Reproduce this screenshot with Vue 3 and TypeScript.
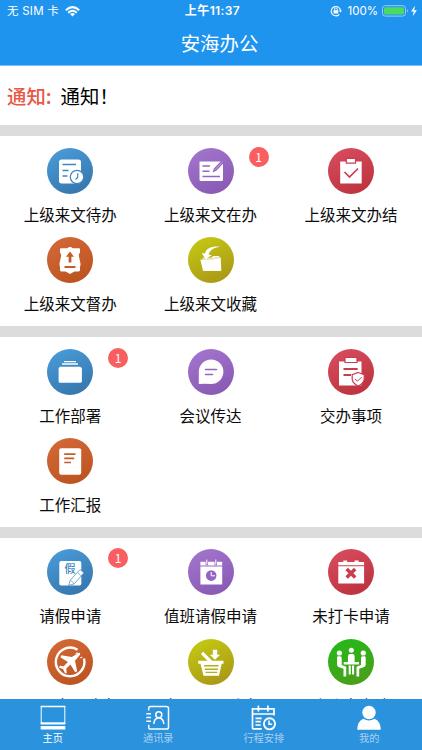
<script setup lang="ts">
interface Item {
  label: string
  icon: string
  tone: string
  badge?: number
}

const groups: Item[][] = [
  [
    { label: '上级来文待办', icon: 'pending', tone: 'blue' },
    { label: '上级来文在办', icon: 'edit', tone: 'purple', badge: 1 },
    { label: '上级来文办结', icon: 'done', tone: 'red' },
    { label: '上级来文督办', icon: 'supervise', tone: 'orange' },
    { label: '上级来文收藏', icon: 'folder', tone: 'olive' },
  ],
  [
    { label: '工作部署', icon: 'stack', tone: 'blue', badge: 1 },
    { label: '会议传达', icon: 'chat', tone: 'purple' },
    { label: '交办事项', icon: 'shield', tone: 'red' },
    { label: '工作汇报', icon: 'report', tone: 'orange' },
  ],
  [
    { label: '请假申请', icon: 'leave', tone: 'blue', badge: 1 },
    { label: '值班请假申请', icon: 'calendar', tone: 'purple' },
    { label: '未打卡申请', icon: 'missed', tone: 'red' },
    { label: '因公出国请审', icon: 'plane', tone: 'orange' },
    { label: '办公用品采购', icon: 'basket', tone: 'olive' },
    { label: '会议室申请', icon: 'meeting', tone: 'green' },
  ],
]

const tabs = [
  { label: '主页', icon: 'home' },
  { label: '通讯录', icon: 'contacts' },
  { label: '行程安排', icon: 'schedule' },
  { label: '我的', icon: 'me' },
]
</script>

<template>
  <div class="screen">
    <header class="header">
      <div class="status">
        <div class="carrier">
          <span>无 SIM 卡</span>
          <svg width="15" height="11" viewBox="0 0 15 11" fill="none" stroke="#fff" stroke-width="2">
            <path d="M.8 4.2Q7.5-2 14.2 4.2M3.2 6.7Q7.5 2.8 11.8 6.7" />
            <path d="M7.5 10.5 5 8q2.5-2 5 0z" fill="#fff" stroke="none" />
          </svg>
        </div>
        <strong class="clock">上午11:37</strong>
        <div class="power">
          <svg class="lock" width="12" height="12" viewBox="0 0 12 12" fill="none" stroke="#fff">
            <path d="M9.2 9.5A4.7 4.7 0 1 1 10.6 6" stroke-width="1.1" />
            <path d="m8.9 5.4 1.7 2 1.3-2z" fill="#fff" stroke="none" />
            <path d="M4.5 5.5V4.3a1.4 1.4 0 0 1 2.8 0v1.2" />
            <path d="M3.5 5.2h4.8v3.3H3.5z" fill="#fff" stroke="none" />
          </svg>
          <span>100%</span>
          <svg class="battery" width="36" height="12" viewBox="0 0 36 12">
            <rect x=".5" y=".7" width="23" height="10.4" rx="2.8" fill="none" stroke="#9bcdf6" />
            <rect x="2" y="2.2" width="20" height="7.4" rx="1.5" fill="#4cd964" />
            <path d="M25 4.2q2 1.7 0 3.4z" fill="#9bcdf6" />
            <path d="m33 .8-4 5.8h2.7l-1 4.6 4.2-6h-2.7z" fill="#fff" />
          </svg>
        </div>
      </div>
      <h1>安海办公</h1>
    </header>

    <div class="notice"><span class="tag">通知:</span><span>通知！</span></div>

    <section v-for="(group, gi) in groups" :key="gi" class="group">
      <div v-for="item in group" :key="item.label" class="item">
        <div class="disc" :class="item.tone">
          <svg viewBox="0 0 46 46" width="46" height="46" fill="#fff" stroke="none">
            <template v-if="item.icon === 'pending'">
              <rect x="12" y="11.5" width="22" height="24" rx="2.5" />
              <path class="line" d="M15.5 16.5H29M15.5 22.5h6M15.5 28h5" stroke-width="1.7" />
              <circle cx="30" cy="29" r="6.7" class="outlined" />
              <path class="line" d="M30.7 25.2v4l-2.2 2.4" stroke-width="1.2" />
            </template>
            <template v-else-if="item.icon === 'edit'">
              <path d="M11.5 13.5H35v18a1.5 1.5 0 0 1-1.5 1.5H13a1.5 1.5 0 0 1-1.5-1.5z" />
              <path class="line" d="M14.5 18H22M14.5 23.3h7M14.5 28.5H32" stroke-width="1.6" />
              <path d="m33.6 12.6 2.4 2.2-7.7 7.9-3.7 1.7 1.3-4z" class="tone-fill" />
              <path d="m34 14.7-7 7" fill="none" stroke="#fff" stroke-width=".5" />
            </template>
            <template v-else-if="item.icon === 'done'">
              <path d="M12.2 13.5h21.5V35.5H12.2z" />
              <path class="line" d="m16.5 24 5 5L30 20.5" stroke-width="1.7" />
              <path d="M18.3 10.3h9.2v4.8h-9.2z" class="outlined" />
            </template>
            <template v-else-if="item.icon === 'supervise'">
              <path d="M14 11.3h6.2q2.8-2.8 5.6 0H32q1 0 1 1v3.5q-1.7 1.4-.9 4.2l1.2 5.5q.5 3-.3 4.5v3q0 1.4-1.4 1.4h-4.2L23 37l-4.4-2.6h-4.2q-1.4 0-1.4-1.4v-3q-.8-1.5-.3-4.5l1.2-5.5q.8-2.8-.9-4.2v-3.5q0-1 1-1z" />
              <path class="tone-fill" d="m23 14.5 4 5.2h-2.6v5.8h-2.8v-5.8H19zM17.5 29h11v2h-11z" />
            </template>
            <template v-else-if="item.icon === 'folder'">
              <path d="M14.5 20.8h9l1.8-1.8h5.4l1.4 1.5h.6l.6 13.2H15z" />
              <path d="M12.3 22.5H31l1.9 11.2H15z" />
              <path class="line" d="M13.5 22h11.8l1.6-1.2h4.8" stroke-width=".6" />
              <path d="M31.8 9.7c-8.6-.6-13.8 2-14.9 6.9l-3.2-.7 3.8 6.3 6.2-3.9-3.1-.8c1.2-4.3 4.8-6.6 11.2-7.8z" />
            </template>
            <template v-else-if="item.icon === 'stack'">
              <path d="M17 12h12v1.3H17zM15 14.2h16v1.5H15z" />
              <path d="M13 18.7q0-1.8 1.5-1.8h17q1.5 0 1.5 1.8zM11.6 19.6q0-1.6 1.6-1.6h20q1.7 0 1.7 1.6v12.6q0 1.6-1.7 1.6h-20q-1.6 0-1.6-1.6z" />
              <path class="line" d="M13.8 17.4h18.5" stroke-width=".8" />
            </template>
            <template v-else-if="item.icon === 'chat'">
              <path d="M10.8 35V22.7A12.3 12.3 0 1 1 23 35q-6-.5-12.2 0z" />
              <path class="line" d="M17.5 20.6h11M17.5 25.6h7" stroke-width="1.5" stroke-linecap="round" />
            </template>
            <template v-else-if="item.icon === 'shield'">
              <path d="M11 12.5h22.5v24H11z" />
              <path class="line" d="M15.5 20h14.2M15.5 26h7.5" stroke-width="2" />
              <path d="M17 8.5h12v5H17z" class="outlined" />
              <path d="m30.2 23.5 6 2.1v5q-.8 4-6 6.4-5.2-2.4-6-6.4v-5z" class="outlined" />
              <path class="line" d="m27 30 2.5 2.2 4-4" stroke-width="1" />
            </template>
            <template v-else-if="item.icon === 'report'">
              <rect x="12.2" y="10.2" width="22" height="26.5" rx="2" />
              <path class="line" d="M17.2 16.2h11.3M17.2 20.3h10M17.2 24.5H24" stroke-width="1.7" />
            </template>
            <template v-else-if="item.icon === 'leave'">
              <rect x="12.3" y="12" width="22" height="24.5" rx="2" />
              <text x="17.5" y="23.5" class="glyph">假</text>
              <path d="m33 20.5 4 3.3-9.7 11-5.7 1.7 1.7-5.5z" class="outlined thin" />
              <path class="line" d="m23.3 31 4 3.8M30.5 23.5l4 3.5" stroke-width=".6" />
            </template>
            <template v-else-if="item.icon === 'calendar'">
              <path d="M12.4 12.8h21.8v3.7H12.4zM12.4 17.5h21.8v18H12.4z" />
              <path class="line" d="M18.8 10.5v5.7M27.8 10.5v5.7" stroke-width="2.4" />
              <path d="M18.8 10.5v5M27.8 10.5v5" stroke="#fff" stroke-width="1.1" />
              <circle cx="23.2" cy="26.6" r="5.3" class="tone-fill" />
              <path d="M23.2 23v3.8H27" fill="none" stroke="#fff" stroke-width="1" />
            </template>
            <template v-else-if="item.icon === 'missed'">
              <path d="M10.3 13h5v-1.5h3.8V13h7.5v-1.5h4V13h5.5v3.3H10.3zM10.3 17.2h25.8v17.2H10.3z" />
              <path class="line" d="m18.7 20 8.5 8.5m0-8.5-8.5 8.5" stroke-width="3.5" />
            </template>
            <template v-else-if="item.icon === 'plane'">
              <path d="M30.5 10.7A14.3 14.3 0 1 0 37 19.5" fill="none" stroke="#fff" stroke-width="2.4" />
              <path d="M31.5 14q2.4-1.2 1.5 1.8l-5 6 2.2 10.5-2 1-4.8-7.8-4.2 4.2.6 4-1.7.8-2-4.2-4.2-1.8 1-1.7 3.8.4 4.2-4.3-7.5-4.7 1-1.9 10.4 1.6z" />
              <path d="m28 15 2-1.8 1.5 1.4zm4.5 4.2 1.8-1.8 1.3 1.6z" />
            </template>
            <template v-else-if="item.icon === 'basket'">
              <path d="M10.2 21.8h25.3v2.9h-1.8L31 36.7H15.5l-3-12h-2.3z" />
              <path class="line" d="M16 26.8h14.5M16.8 30.2H30M17.5 33.4h11.8" stroke-width="1.4" />
              <path d="m15 14.8 8.5 8.5" stroke="#fff" stroke-width="3.3" stroke-linecap="round" />
              <path d="M24.8 10.8h4.4v5h3l-5.2 5-5.2-5h3z" />
            </template>
            <template v-else>
              <circle cx="23.3" cy="11.2" r="2.5" />
              <circle cx="11.4" cy="14" r="2.6" />
              <circle cx="35.3" cy="14" r="2.6" />
              <path d="M20 23v-6q0-2 2-2h2.6q2 0 2 2v6h4.3v2.4H15.7V23zM20.7 26.5h2.1v9h-2.1zM24 26.5h2.1v9H24z" />
              <path d="M9 18.7q0-1.4 1.3-1.4h1.9q1.5 0 1.5 1.7V26l4.5 1.8v9.7h-2.7v-7.7l-5-1.8q-1.5-.6-1.5-2.4zM37.7 18.7q0-1.4-1.3-1.4h-1.9q-1.5 0-1.5 1.7V26l-4.5 1.8v9.7h2.7v-7.7l5-1.8q1.5-.6 1.5-2.4z" />
            </template>
          </svg>
          <i v-if="item.badge" class="badge">{{ item.badge }}</i>
        </div>
        <span class="label">{{ item.label }}</span>
      </div>
    </section>

    <nav class="tabs">
      <div v-for="(tab, i) in tabs" :key="tab.label" class="tab" :class="{ active: i === 0 }">
        <svg width="28" height="26" viewBox="0 0 28 26" fill="none" stroke="#fff" stroke-width="1.5">
          <template v-if="tab.icon === 'home'">
            <path d="M2.2 1.5h23.6v17H2.2z" stroke-width="1" />
            <path d="M1.7 1.5h24.6" />
            <path d="M1.7 18.4h24.6" stroke-width="2.2" />
            <path d="M1.7 22.8h24.6" stroke-width="3.4" />
          </template>
          <template v-else-if="tab.icon === 'contacts'">
            <path d="M4.7 5.5V3.3q0-1.8 1.8-1.8h16q2 0 2 1.8v19q0 1.8-2 1.8h-16q-1.8 0-1.8-1.8v-2.5M2.3 8.8H7M2.3 12.5H7M2.3 16.2H7" />
            <circle cx="14.8" cy="9.8" r="3" />
            <path d="M9.8 19q.3-5.6 5-6.2 4.7.6 5 6.2" />
          </template>
          <template v-else-if="tab.icon === 'schedule'">
            <path d="M24 10.5V3.8H2.5V23q0 .8.8.8h8.5M2.5 9h21.5M8.4.5v6M17.9.5v6M5.5 13.3h6.2M5.5 16.7h5.3M5.5 20h5.3" stroke-width="1.7" />
            <circle cx="19.5" cy="18.8" r="5.6" stroke-width="1.9" />
            <path d="M19 15.5v3.8h3.2" />
          </template>
          <template v-else>
            <circle cx="14" cy="7.5" r="6.7" fill="#fff" stroke="none" />
            <path d="M2.2 24.8q.3-8.8 6.2-11 5.4 3.2 11.2 0 5.8 2.2 6.2 11z" fill="#fff" stroke="none" />
          </template>
        </svg>
        <span>{{ tab.label }}</span>
      </div>
    </nav>
  </div>
</template>

<style>
body {
  overflow: hidden;
}
</style>

<style scoped>
.screen {
  width: 422px;
  height: 750px;
  display: grid;
  grid-template-rows: 66px 70px 201px 201px 161px 51px;
  overflow: hidden;
  background: #fff;
  color: #111;
  font-family: "Liberation Sans", "Noto Sans CJK SC", sans-serif;
}
.header {
  background: #1f94ef;
  border-bottom: 1px solid #7fc1f6;
  box-sizing: border-box;
  color: #fff;
}
.status {
  display: grid;
  grid-template-columns: 1fr auto 1fr;
  align-items: center;
  height: 22px;
  padding: 0 4px 0 7px;
  font-family: Inter, "Noto Sans CJK SC", sans-serif;
  font-size: 11.5px;
  line-height: 22px;
}
.carrier,
.power {
  display: flex;
  align-items: center;
}
.carrier {
  gap: 6px;
  letter-spacing: 0.25px;
}
.clock {
  font-size: 12px;
  font-weight: 600;
  letter-spacing: 0.4px;
}
.power {
  justify-content: flex-end;
}
.lock {
  margin-right: 6px;
}
.battery {
  margin-left: 4px;
}
h1 {
  margin: 7px 0 0;
  padding-left: 17px;
  text-align: center;
  font: 400 19.4px/28px "Noto Sans CJK SC", sans-serif;
}
.notice {
  display: flex;
  align-items: center;
  gap: 9px;
  height: 59px;
  padding-left: 7px;
  font: 400 19.4px/59px "Noto Sans CJK SC", sans-serif;
  color: #000;
}
.tag {
  color: #e85846;
  font-weight: 500;
}
.group {
  box-sizing: border-box;
  display: grid;
  grid-template-columns: repeat(3, 140.4px);
  grid-auto-rows: 89.5px;
  border-top: 11px solid #dcdcdc;
  margin-top: -11px;
  padding-top: 11.6px;
  overflow: hidden;
  align-content: start;
}
.group:nth-of-type(3) {
  padding-top: 11px;
}
.item {
  display: flex;
  flex-direction: column;
  align-items: center;
}
.disc {
  position: relative;
  width: 46px;
  height: 46px;
  border-radius: 50%;
  background: linear-gradient(155deg, var(--from), var(--to));
}
.disc svg {
  display: block;
}
.blue {
  --from: #4a9edb;
  --to: #3472a8;
  --tone: #3f86bf;
}
.purple {
  --from: #a477cf;
  --to: #8656b1;
  --tone: #9566c1;
}
.red {
  --from: #d94f61;
  --to: #b92f3a;
  --tone: #c93e4d;
}
.orange {
  --from: #d56a38;
  --to: #b9511d;
  --tone: #c55d2b;
}
.olive {
  --from: #c6cd13;
  --to: #a79217;
  --tone: #b6af15;
}
.green {
  --from: #20bc17;
  --to: #509a1b;
  --tone: #36ad1c;
}
.line {
  fill: none;
  stroke: var(--tone);
}
.outlined {
  stroke: var(--tone);
  stroke-width: 1.2;
}
.thin {
  stroke-width: 0.7;
}
.tone-fill {
  fill: var(--tone);
}
.glyph {
  fill: var(--tone);
  font: 500 11px "Noto Sans CJK SC", sans-serif;
}
.badge {
  position: absolute;
  left: 61px;
  top: -1px;
  width: 20px;
  height: 20px;
  border-radius: 50%;
  background: #f95f60;
  color: #fff;
  font: 400 12px/20px "Noto Sans CJK SC", sans-serif;
  text-align: center;
}
.label {
  margin-top: 8px;
  font: 400 15.5px/24px "Noto Sans CJK SC", sans-serif;
  color: #0b0b0b;
  white-space: nowrap;
}
.tabs {
  position: relative;
  display: grid;
  grid-template-columns: repeat(4, 1fr);
  background: #2b92dd;
}
.tab {
  display: flex;
  flex-direction: column;
  align-items: center;
  padding-top: 6px;
  font: 400 10.2px/13px "Noto Sans CJK SC", sans-serif;
  color: #a9d0f0;
}
.active {
  color: #fff;
}
</style>
